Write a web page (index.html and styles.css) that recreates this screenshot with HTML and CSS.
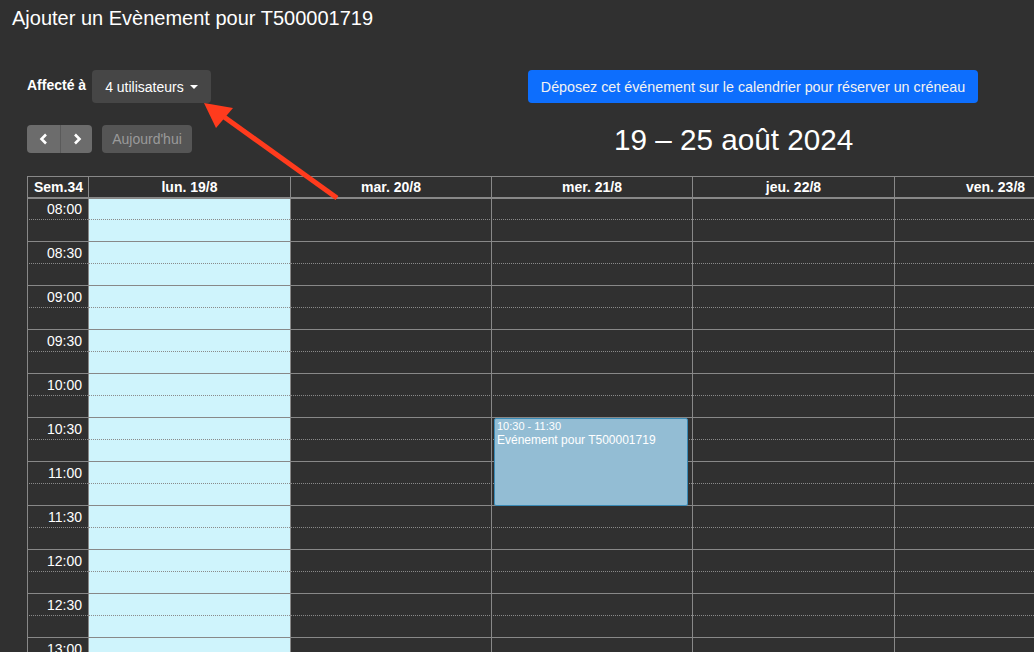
FILE: index.html
```html
<!DOCTYPE html>
<html lang="fr">
  <head>
    <meta charset="UTF-8" />
    <meta name="viewport" content="width=device-width, initial-scale=1.0" />
    <title>Ajouter un Evènement</title>
    <link rel="stylesheet" href="styles.css">
  </head>
  <body>
    <h1>Ajouter un Evènement pour T500001719</h1>

    <div class="barre">
      <div class="affecte">
        <span class="etiquette">Affecté à</span>
        <button class="menu">4 utilisateurs <span class="caret"></span></button>
      </div>
      <button class="deposer">Déposez cet événement sur le calendrier pour réserver un créneau</button>
    </div>

    <div class="navigation">
      <div class="groupe">
        <button class="fleche">
          <svg width="10" height="12" viewBox="0 0 10 12"><polyline points="7,1.5 2.5,6 7,10.5" fill="none" stroke="#fff" stroke-width="2.6"/></svg>
        </button>
        <button class="fleche">
          <svg width="10" height="12" viewBox="0 0 10 12"><polyline points="3,1.5 7.5,6 3,10.5" fill="none" stroke="#fff" stroke-width="2.6"/></svg>
        </button>
      </div>
      <button class="aujourdhui" disabled>Aujourd'hui</button>
      <h2 class="periode">19 – 25 août 2024</h2>
    </div>

    <div class="calendrier">
      <div class="entete">
        <div class="cellule axe">Sem.34</div>
        <div class="cellule">lun. 19/8</div>
        <div class="cellule">mar. 20/8</div>
        <div class="cellule">mer. 21/8</div>
        <div class="cellule">jeu. 22/8</div>
        <div class="cellule">ven. 23/8</div>
      </div>
      <div class="grille">
        <div class="col c1"></div>
        <div class="col c2 jour-actuel"></div>
        <div class="col c3"></div>
        <div class="col c4"></div>
        <div class="col c5"></div>
        <div class="col c6"></div>

        <div class="lignes">
          <div class="creneau"><div class="moitie"><span class="heure">08:00</span></div></div>
          <div class="creneau"><div class="moitie"><span class="heure">08:30</span></div></div>
          <div class="creneau"><div class="moitie"><span class="heure">09:00</span></div></div>
          <div class="creneau"><div class="moitie"><span class="heure">09:30</span></div></div>
          <div class="creneau"><div class="moitie"><span class="heure">10:00</span></div></div>
          <div class="creneau"><div class="moitie"><span class="heure">10:30</span></div></div>
          <div class="creneau"><div class="moitie"><span class="heure">11:00</span></div></div>
          <div class="creneau"><div class="moitie"><span class="heure">11:30</span></div></div>
          <div class="creneau"><div class="moitie"><span class="heure">12:00</span></div></div>
          <div class="creneau"><div class="moitie"><span class="heure">12:30</span></div></div>
          <div class="creneau"><div class="moitie"><span class="heure">13:00</span></div></div>
        </div>

        <div class="evenement">
          <div class="evt-heure">10:30 - 11:30</div>
          <div class="evt-titre">Evénement pour T500001719</div>
        </div>
      </div>
    </div>

    <!-- flèche rouge d'annotation par-dessus la page -->
    <svg class="annotation" width="1034" height="652" viewBox="0 0 1034 652">
      <line x1="337" y1="198" x2="220" y2="114" stroke="#ff3b1d" stroke-width="5"/>
      <polygon points="204,103 233,108 216,128" fill="#ff3b1d"/>
    </svg>
  </body>
</html>
```

FILE: styles.css
```css
html, body {
  overflow: hidden;
}
body {
  margin: 0;
  height: 652px;
  position: relative;
  background-color: #303030;
  color: #fff;
  font-family: "Liberation Sans", Arial, sans-serif;
}

h1 {
  margin: 0;
  padding: 8px 12px 0;
  font-size: 20px;
  line-height: 21px;
  font-weight: normal;
}

/* Première barre : affectation et bouton bleu */
.barre {
  display: flex;
  justify-content: space-between;
  align-items: center;
  margin-top: 41px;
  padding: 0 56px 0 27px;
  height: 33px;
}
.affecte {
  display: flex;
  align-items: center;
  gap: 6px;
}
.etiquette {
  font-size: 14px;
  font-weight: bold;
  margin-top: -3px;
}
button {
  font-family: inherit;
  border: none;
  cursor: pointer;
}
.menu {
  height: 33px;
  padding: 0 13px;
  background-color: #464646;
  color: #fff;
  font-size: 14px;
  border-radius: 4px;
}
.caret {
  display: inline-block;
  vertical-align: middle;
  margin-left: 2px;
  margin-top: -2px;
  border-top: 4px solid #fff;
  border-left: 4px solid transparent;
  border-right: 4px solid transparent;
}
.deposer {
  height: 33px;
  width: 450px;
  padding: 0;
  background-color: #0d6efd;
  color: #f2f2f2;
  font-size: 14.3px;
  border-radius: 4px;
}

/* Deuxième barre : navigation et titre */
.navigation {
  display: flex;
  align-items: center;
  margin-top: 22px;
  padding-left: 27px;
  height: 28px;
}
.groupe {
  display: flex;
  border-radius: 4px;
  overflow: hidden;
}
.fleche {
  width: 33px;
  height: 28px;
  padding: 0;
  background-color: #6c6c6c;
  display: flex;
  align-items: center;
  justify-content: center;
}
.fleche + .fleche {
  width: 32px;
  border-left: 1px solid #5a5a5a;
}
.aujourdhui {
  margin-left: 10px;
  width: 90px;
  height: 28px;
  padding: 0;
  background-color: #555;
  color: #9a9a9a;
  font-size: 14px;
  border-radius: 4px;
  cursor: default;
}
.periode {
  margin: 2px 0 0 422px;
  font-size: 29.7px;
  line-height: 28px;
  font-weight: normal;
  white-space: nowrap;
}

/* Calendrier */
.calendrier {
  margin-top: 23px;
  margin-left: 27px;
  width: 1069px;
}
.entete,
.grille {
  display: grid;
  grid-template-columns: 61px 202px 201px 201px 202px 202px;
}
.entete {
  border-top: 1px solid #888;
  border-bottom: 2px solid #888;
}
.cellule {
  border-left: 1px solid #888;
  height: 20px;
  line-height: 20px;
  font-size: 14px;
  font-weight: bold;
  text-align: center;
}
.cellule.axe {
  text-align: right;
  padding-right: 5px;
}

.grille {
  grid-template-rows: 21px repeat(23, 22px);
}
.col {
  grid-row: 1 / -1;
  border-left: 1px solid #888;
}
.c1 { grid-column: 1; }
.c2 { grid-column: 2; }
.c3 { grid-column: 3; }
.c4 { grid-column: 4; }
.c5 { grid-column: 5; }
.c6 { grid-column: 6; }
.jour-actuel {
  background-color: #cff4fc;
}
.lignes {
  grid-row: 1 / -1;
  grid-column: 1 / -1;
}
.creneau {
  box-sizing: border-box;
  height: 44px;
  border-bottom: 1px solid #888;
}
.creneau:first-child {
  height: 43px;
}
.moitie {
  box-sizing: border-box;
  height: 22px;
  border-bottom: 1px dotted #8a8a8a;
}
.creneau:first-child .moitie {
  height: 21px;
}
.heure {
  display: block;
  width: 61px;
  box-sizing: border-box;
  padding: 3px 6px 0 0;
  text-align: right;
  font-size: 14px;
  line-height: 16px;
}
.creneau:first-child .heure {
  padding-top: 2px;
}

.evenement {
  grid-column: 4;
  grid-row: 11 / 15;
  margin: 0 4px 0 3px;
  background-color: #93bdd4;
  border: 1px solid #3a8ab5;
  border-radius: 2px;
  padding: 1px 2px;
  color: #fff;
  overflow: hidden;
}
.evt-heure {
  font-size: 11px;
  line-height: 13px;
}
.evt-titre {
  font-size: 12px;
  line-height: 14px;
}

.annotation {
  position: absolute;
  top: 0;
  left: 0;
  pointer-events: none;
}
```
